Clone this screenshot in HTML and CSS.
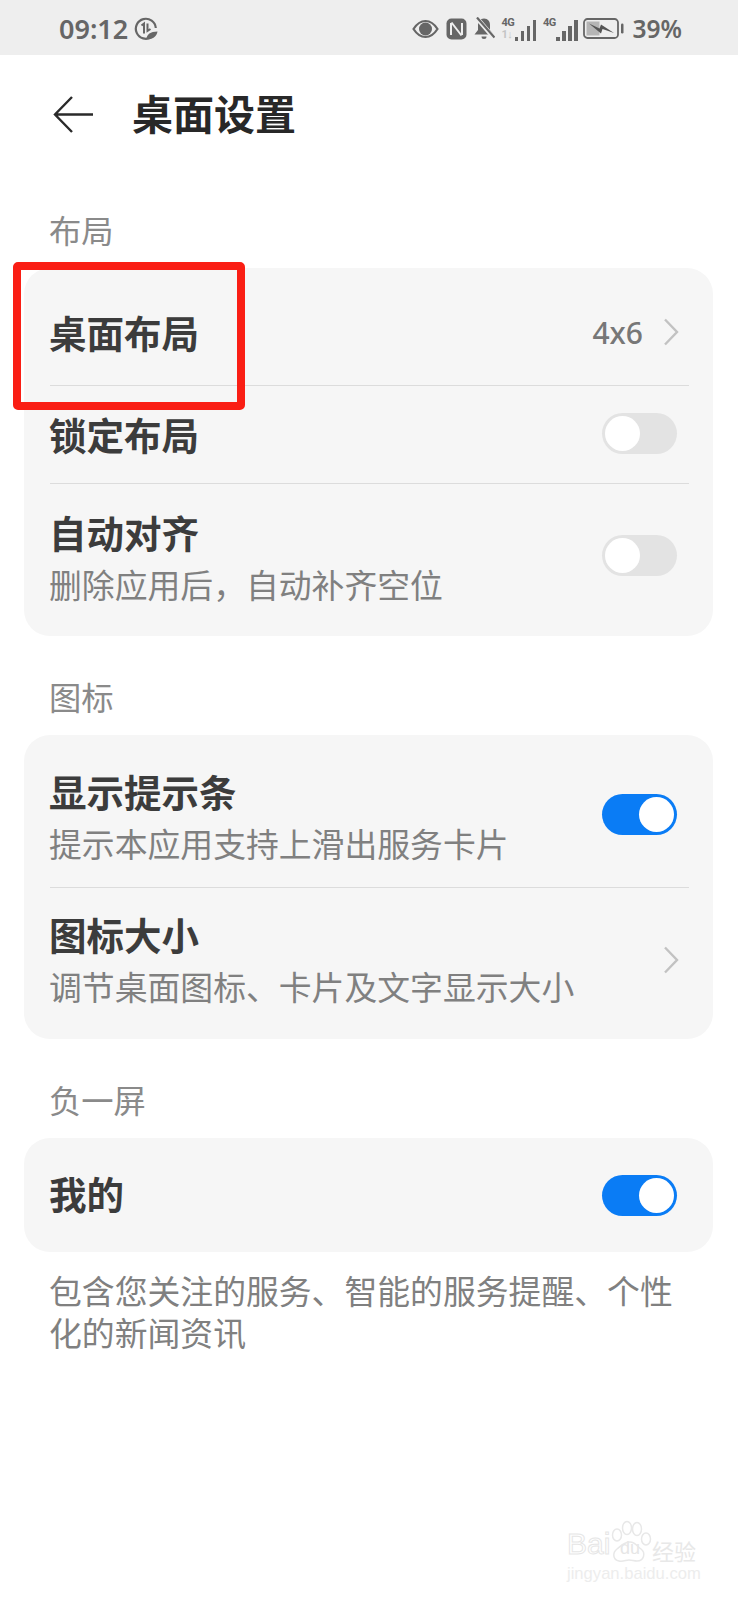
FILE: index.html
```html
<!DOCTYPE html>
<html lang="zh-CN">
  <head>
    <meta charset="UTF-8" />
    <meta name="viewport" content="width=device-width, initial-scale=1.0" />
    <title>桌面设置</title>
    <link rel="stylesheet" href="styles.css">
  </head>
  <body>
    <div class="status-bar">
      <div class="status-left">
        <span class="clock">09:12</span>
        <svg class="leaf-icon" width="24" height="24" viewBox="0 0 24 24">
          <path d="M17.500 20A10 10 0 1 1 21.800 11" fill="none" stroke="#666" stroke-width="2.200"/>
          <path d="M7.500 8.500l2.500-2v10M13.500 6.500v7.500l3-2" fill="none" stroke="#666" stroke-width="2"/>
          <path d="M12.500 22c0-4.500 4-7.500 11-7.500-1 5-4.500 8-11 7.500z" fill="#666"/>
        </svg>
      </div>
      <div class="status-right">
        <!-- 눈 -->
        <svg width="27" height="20" viewBox="0 0 27 20">
          <path d="M1.500 10C5 4.500 9 2 13.500 2S22 4.500 25.500 10C22 15.500 18 18 13.500 18S5 15.500 1.500 10z" fill="none" stroke="#666" stroke-width="2.200"/>
          <circle cx="13.500" cy="10" r="6.500" fill="#666"/>
        </svg>
        <!-- NFC -->
        <svg width="21" height="22" viewBox="0 0 21 22">
          <rect x="0.500" y="0.500" width="20" height="21" rx="5" fill="#666"/>
          <path d="M5 5v12M16 5v12M5.500 4.500l10 13" fill="none" stroke="#eee" stroke-width="2"/>
        </svg>
        <!-- 무음 -->
        <svg width="21" height="23" viewBox="0 0 21 23">
          <path d="M10 1.500c4 0 6 3 6 6.500v5l3.500 4.500H.500L4 13V8c0-3.500 2-6.500 6-6.500z" fill="#666"/>
          <path d="M7.500 19.500h5a2.500 2.500 0 0 1-5 0z" fill="#666"/>
          <path d="M2 0l18 21" stroke="#eee" stroke-width="4.500"/>
          <path d="M3 0.500l17.500 20" stroke="#666" stroke-width="2.200"/>
        </svg>
        <!-- 신호 1 -->
        <div class="signal">
          <div class="signal-text">
            <span class="net">4G</span>
            <span class="speed">1↓</span>
          </div>
          <div class="bars">
            <i class="b1"></i><i class="b2"></i><i class="b3"></i><i class="b4"></i>
          </div>
        </div>
        <!-- 신호 2 -->
        <div class="signal">
          <div class="signal-text">
            <span class="net">4G</span>
            <span class="speed"></span>
          </div>
          <div class="bars">
            <i class="b1"></i><i class="b2"></i><i class="b3"></i><i class="b4"></i>
          </div>
        </div>
        <!-- 배터리 -->
        <svg class="battery" width="41" height="23" viewBox="0 0 41 23">
          <rect x="1" y="2" width="34" height="19" rx="3.500" fill="none" stroke="#666" stroke-width="1.800"/>
          <rect x="3.500" y="4.500" width="13" height="14" fill="#b5b5b5"/>
          <path d="M6 6.500l10.500 5 1.500-4 13 8.500-11.500-4-1.500 4.500z" fill="#555"/>
          <rect x="38" y="6.500" width="2.500" height="10" rx="1.200" fill="#666"/>
        </svg>
        <span class="percent">39%</span>
      </div>
    </div>

    <div class="title-bar">
      <svg class="back" width="42" height="40" viewBox="0 0 42 40">
        <path d="M40 19.500H2M19 2L2 19.500 19 37" fill="none" stroke="#2a2a2a" stroke-width="2.400"/>
      </svg>
      <h1>桌面设置</h1>
    </div>

    <div class="section-label">布局</div>
    <div class="card">
      <div class="row row-top">
        <div class="row-text"><div class="row-title">桌面布局</div></div>
        <span class="row-value">4x6</span>
        <svg class="chevron" width="16" height="28" viewBox="0 0 16 28">
          <path d="M2 1.500L14 14 2 26.500" fill="none" stroke="#c2c2c2" stroke-width="2.400"/>
        </svg>
      </div>
      <div class="row row-mid">
        <div class="row-text"><div class="row-title">锁定布局</div></div>
        <div class="toggle"><span class="knob"></span></div>
      </div>
      <div class="row row-tall">
        <div class="row-text up-mid">
          <div class="row-title">自动对齐</div>
          <div class="row-sub">删除应用后，自动补齐空位</div>
        </div>
        <div class="toggle lift-more"><span class="knob"></span></div>
      </div>
    </div>

    <div class="section-label">图标</div>
    <div class="card">
      <div class="row row-first">
        <div class="row-text down-small">
          <div class="row-title">显示提示条</div>
          <div class="row-sub">提示本应用支持上滑出服务卡片</div>
        </div>
        <div class="toggle on"><span class="knob"></span></div>
      </div>
      <div class="row row-short">
        <div class="row-text up-big">
          <div class="row-title">图标大小</div>
          <div class="row-sub">调节桌面图标、卡片及文字显示大小</div>
        </div>
        <svg class="chevron lift" width="16" height="28" viewBox="0 0 16 28">
          <path d="M2 1.500L14 14 2 26.500" fill="none" stroke="#c2c2c2" stroke-width="2.400"/>
        </svg>
      </div>
    </div>

    <div class="section-label">负一屏</div>
    <div class="card">
      <div class="row row-single">
        <div class="row-text up-small"><div class="row-title">我的</div></div>
        <div class="toggle on"><span class="knob"></span></div>
      </div>
    </div>
    <p class="note">包含您关注的服务、智能的服务提醒、个性化的新闻资讯</p>

    <!-- 빨간 강조 박스 -->
    <div class="highlight"></div>

    <!-- 워터마크 -->
    <div class="watermark">
      <div class="wm-top">
        <span class="wm-bai">Bai</span>
        <svg class="wm-paw" width="45" height="45" viewBox="0 0 45 45">
          <g fill="none" stroke="#e8e8e8" stroke-width="1.500">
            <ellipse cx="7" cy="15" rx="4.500" ry="6"/>
            <ellipse cx="17" cy="8" rx="4.500" ry="6.500"/>
            <ellipse cx="27" cy="9" rx="4.500" ry="6.500"/>
            <ellipse cx="36" cy="19" rx="4.500" ry="6"/>
            <path d="M20 22c5 0 7 4 11 7 5 4 3 12-4 12-3 0-5-1-8-1s-6 2-10 1c-6-1-7-8-2-12 4-3 7-7 13-7z"/>
          </g>
        </svg>
        <span class="wm-du">du</span>
        <span class="wm-cn">经验</span>
      </div>
      <div class="wm-url">jingyan.baidu.com</div>
    </div>
  </body>
</html>
```

FILE: styles.css
```css
* {
  box-sizing: border-box;
}

body {
  position: relative;
  width: 738px;
  height: 1600px;
  margin: 0;
  overflow: hidden;
  background: #fff;
  font-family: "Noto Sans CJK SC", "Noto Sans", sans-serif;
  color: #333;
}

.status-bar {
  display: flex;
  justify-content: space-between;
  align-items: center;
  height: 55px;
  padding: 2px 56px 0 59px;
  background: #eeeeee;
  color: #666;
}

.status-left,
.status-right {
  display: flex;
  align-items: center;
}

.status-left {
  gap: 6px;
}

.status-right {
  gap: 7px;
}

.battery {
  margin-left: -2px;
}

.clock,
.percent {
  font-family: "Noto Sans", sans-serif;
  font-weight: 600;
  line-height: 30px;
}

.clock {
  font-size: 27px;
}

.percent {
  margin-left: 2px;
  font-size: 24.500px;
}

.signal {
  display: flex;
  align-items: flex-end;
  gap: 1px;
  height: 24px;
}

.signal-text {
  display: flex;
  flex-direction: column;
  width: 12px;
  height: 24px;
  font-family: "Roboto", sans-serif;
  font-size: 11px;
  font-weight: 700;
  line-height: 12px;
  letter-spacing: -0.5px;
}

.speed {
  color: #c4c4c4;
}

.bars {
  display: flex;
  align-items: flex-end;
  gap: 2.500px;
  height: 21px;
}

.bars i {
  display: block;
  width: 3.500px;
  background: #666;
}

.b1 {
  height: 4px;
}

.b2 {
  height: 10px;
}

.b3 {
  height: 15px;
}

.b4 {
  height: 21px;
}

.title-bar {
  display: flex;
  align-items: center;
  height: 114px;
  padding-left: 53px;
}

.back {
  margin-top: 5px;
}

.title-bar h1 {
  margin: 0 0 0 37px;
  font-size: 41px;
  font-weight: 700;
  line-height: 50px;
  color: #282828;
}

.section-label {
  height: 99px;
  padding: 38px 0 0 49px;
  font-size: 32.300px;
  line-height: 44px;
  color: #8a8a8a;
}

.card {
  width: 689px;
  margin-left: 24px;
  padding: 0 24px 0 26px;
  border-radius: 26px;
  background: #f6f6f6;
}

.row {
  display: flex;
  align-items: center;
  border-bottom: 1px solid #dcdcdc;
}

.row:last-child {
  border-bottom: 0;
}

.row-top {
  height: 118px;
  padding-top: 11px;
}

.row-mid {
  height: 98px;
  padding-bottom: 2px;
}

.row-tall {
  height: 152px;
}

.row-first {
  height: 153px;
  padding-top: 7px;
}

.row-short {
  height: 151px;
}

.row-single {
  height: 114px;
}

.row-text {
  flex: 1;
  margin-left: -1px;
}

.up-small {
  padding-bottom: 4px;
}

.up-mid {
  padding-bottom: 6px;
}

.up-big {
  padding-bottom: 10px;
}

.down-small {
  padding-top: 2px;
}

.lift {
  margin-bottom: 8px;
}

.lift-more {
  margin-bottom: 10px;
}

.row-title {
  font-size: 37.500px;
  font-weight: 700;
  line-height: 50px;
  color: #3c3c3c;
}

.row-sub {
  margin-top: 4px;
  font-size: 32.850px;
  line-height: 46px;
  color: #808080;
}

.row-value {
  margin-right: 20px;
  font-family: "Noto Sans", sans-serif;
  font-size: 30px;
  font-weight: 500;
  color: #777;
}

.chevron {
  margin-right: 10px;
}

.toggle {
  display: flex;
  align-items: center;
  width: 75px;
  height: 41px;
  margin-right: 12px;
  padding: 0 3px;
  border-radius: 21px;
  background: #e3e3e3;
}

.toggle.on {
  justify-content: flex-end;
  background: #0a7cf5;
}

.knob {
  width: 35px;
  height: 35px;
  border-radius: 50%;
  background: #fff;
}

.note {
  margin: 17px 40px 0 49px;
  font-size: 32.850px;
  line-height: 42px;
  color: #808080;
}

.highlight {
  position: absolute;
  left: 13px;
  top: 262px;
  width: 232px;
  height: 148px;
  border: 8px solid #fa1e14;
  border-radius: 5px;
}

.watermark {
  position: absolute;
  left: 567px;
  top: 1519px;
  width: 140px;
  color: #fff;
}

.wm-top {
  position: relative;
  display: flex;
  align-items: flex-end;
  height: 42px;
  font-family: "Liberation Sans", sans-serif;
}

.wm-bai {
  width: 46px;
  margin-bottom: 2px;
  font-size: 30px;
  line-height: 30px;
  -webkit-text-stroke: 1px #e6e6e6;
}

.wm-paw {
  position: absolute;
  left: 43px;
  top: 1px;
}

.wm-du {
  width: 34px;
  margin-bottom: 2px;
  font-size: 18px;
  line-height: 22px;
  text-align: center;
  color: #e6e6e6;
}

.wm-cn {
  margin-left: 5px;
  font-family: "Noto Sans CJK SC", sans-serif;
  font-size: 22px;
  line-height: 22px;
  color: #e8e8e8;
}

.wm-url {
  margin-top: 4px;
  font-family: "Liberation Sans", sans-serif;
  font-size: 16.600px;
  line-height: 18px;
  white-space: nowrap;
  color: #ededed;
}
```
